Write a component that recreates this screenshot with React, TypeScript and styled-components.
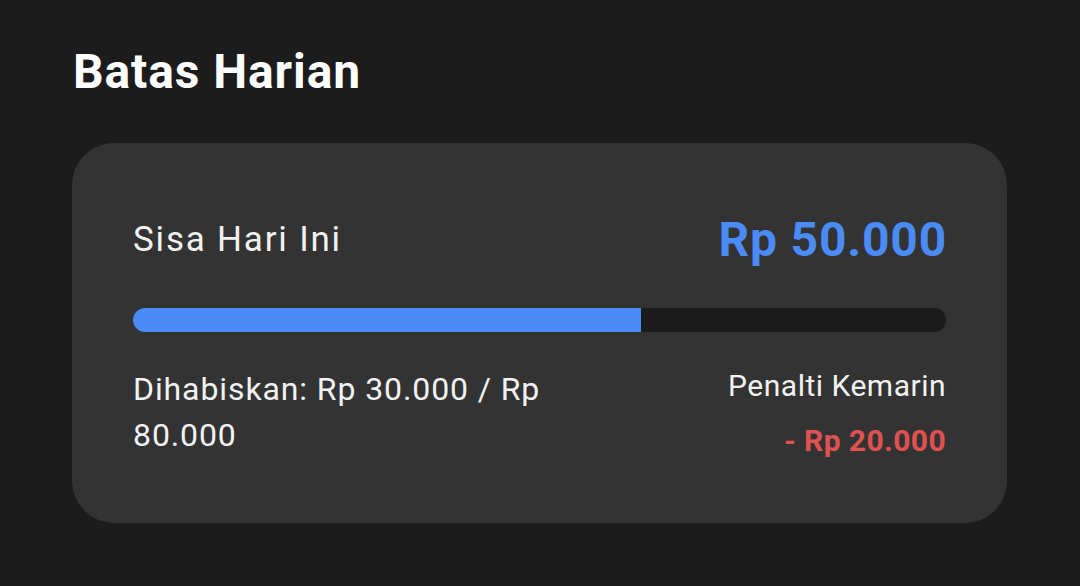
import React from 'react'
import styled, { createGlobalStyle } from 'styled-components'

const GlobalStyle = createGlobalStyle`
  html, body {
    margin: 0;
    padding: 0;
    background: #1c1c1c;
  }
  body {
    font-family: Roboto, 'Noto Sans', sans-serif;
    color: #ffffff;
  }
`

const Page = styled.div`
  width: 1080px;
  height: 586px;
  box-sizing: border-box;
  padding: 43px 72px 0 72px;
  background: #1c1c1c;
`

const Title = styled.h1`
  margin: 0 0 42px 1px;
  font-size: 48px;
  font-weight: 700;
  line-height: 58px;
  letter-spacing: 0.9px;
  color: #ffffff;
`

const Card = styled.div`
  width: 935px;
  height: 380px;
  box-sizing: border-box;
  padding: 66px 61px 0 61px;
  background: #333333;
  border-radius: 42px;
`

const HeadRow = styled.div`
  display: flex;
  justify-content: space-between;
  align-items: center;
  height: 60px;
`

const Label = styled.span`
  font-size: 35px;
  font-weight: 400;
  letter-spacing: 1.8px;
  color: #f2f2f2;
`

const Remaining = styled.span`
  font-size: 48px;
  font-weight: 700;
  letter-spacing: 0.8px;
  margin-right: -1px;
  color: #4a8bf5;
`

const Track = styled.div`
  margin-top: 39px;
  height: 24px;
  border-radius: 12px;
  background: #1c1c1c;
  overflow: hidden;
`

const Fill = styled.div`
  height: 100%;
  background: #4a8bf5;
`

const FootRow = styled.div`
  margin-top: 34px;
  display: flex;
  justify-content: space-between;
  align-items: flex-start;
`

const Spent = styled.div`
  max-width: 440px;
  font-size: 32px;
  line-height: 46px;
  letter-spacing: 0.9px;
  color: #f2f2f2;
`

const Penalty = styled.div`
  display: flex;
  flex-direction: column;
  align-items: flex-end;
  gap: 15px;
`

const PenaltyLabel = styled.span`
  font-size: 30px;
  line-height: 40px;
  letter-spacing: 0.5px;
  color: #f2f2f2;
`

const PenaltyValue = styled.span`
  font-size: 30px;
  line-height: 40px;
  font-weight: 700;
  letter-spacing: 0.4px;
  color: #e05252;
`

const limit = 80000
const spent = 30000

export default function App() {
  const left = limit - spent
  return (
    <>
      <GlobalStyle />
      <Page>
        <Title>Batas Harian</Title>
        <Card>
          <HeadRow>
            <Label>Sisa Hari Ini</Label>
            <Remaining>Rp 50.000</Remaining>
          </HeadRow>
          <Track>
            <Fill style={{ width: `${(left / limit) * 100}%` }} />
          </Track>
          <FootRow>
            <Spent>Dihabiskan: Rp 30.000 / Rp 80.000</Spent>
            <Penalty>
              <PenaltyLabel>Penalti Kemarin</PenaltyLabel>
              <PenaltyValue>- Rp 20.000</PenaltyValue>
            </Penalty>
          </FootRow>
        </Card>
      </Page>
    </>
  )
}
